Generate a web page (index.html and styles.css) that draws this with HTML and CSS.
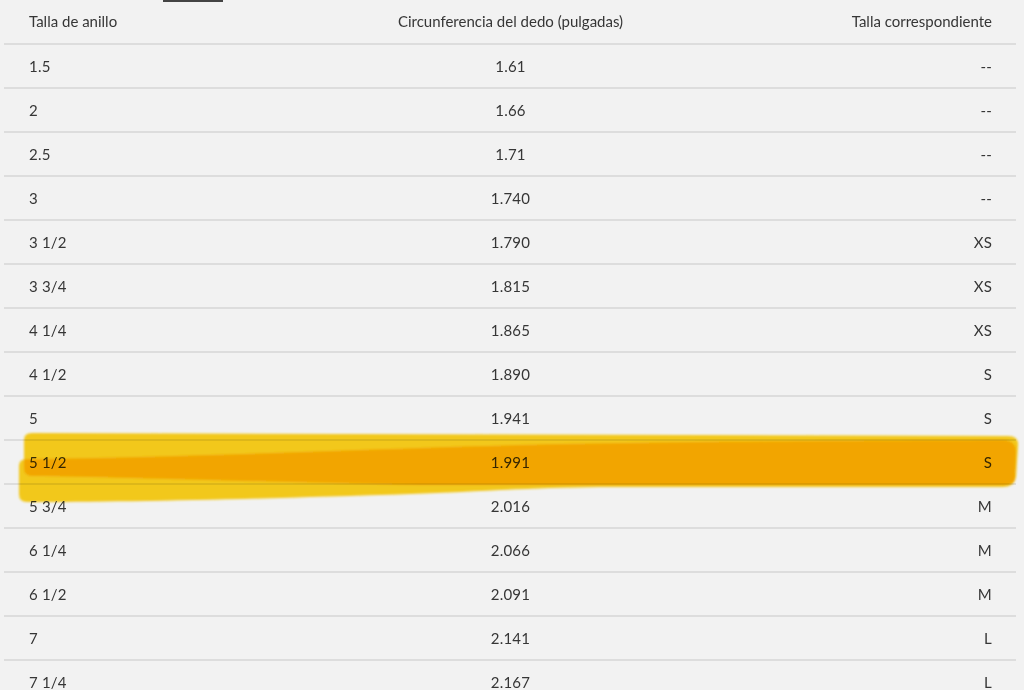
FILE: index.html
```html
<!DOCTYPE html>
<html lang="es">
<head>
<meta charset="utf-8">
<title>Tabla de tallas</title>
<link rel="stylesheet" href="styles.css">
</head>
<body>
<div class="page">
  <div class="tabbar"><span class="tab-underline"></span></div>
  <div class="table">
    <div class="row head"><div class="c1">Talla de anillo</div><div class="c2">Circunferencia del dedo (pulgadas)</div><div class="c3">Talla correspondiente</div></div>
    <div class="row"><div class="c1">1.5</div><div class="c2">1.61</div><div class="c3">--</div></div>
    <div class="row"><div class="c1">2</div><div class="c2">1.66</div><div class="c3">--</div></div>
    <div class="row"><div class="c1">2.5</div><div class="c2">1.71</div><div class="c3">--</div></div>
    <div class="row"><div class="c1">3</div><div class="c2">1.740</div><div class="c3">--</div></div>
    <div class="row"><div class="c1">3 1/2</div><div class="c2">1.790</div><div class="c3">XS</div></div>
    <div class="row"><div class="c1">3 3/4</div><div class="c2">1.815</div><div class="c3">XS</div></div>
    <div class="row"><div class="c1">4 1/4</div><div class="c2">1.865</div><div class="c3">XS</div></div>
    <div class="row"><div class="c1">4 1/2</div><div class="c2">1.890</div><div class="c3">S</div></div>
    <div class="row"><div class="c1">5</div><div class="c2">1.941</div><div class="c3">S</div></div>
    <div class="row"><div class="c1">5 1/2</div><div class="c2">1.991</div><div class="c3">S</div></div>
    <div class="row"><div class="c1">5 3/4</div><div class="c2">2.016</div><div class="c3">M</div></div>
    <div class="row"><div class="c1">6 1/4</div><div class="c2">2.066</div><div class="c3">M</div></div>
    <div class="row"><div class="c1">6 1/2</div><div class="c2">2.091</div><div class="c3">M</div></div>
    <div class="row"><div class="c1">7</div><div class="c2">2.141</div><div class="c3">L</div></div>
    <div class="row"><div class="c1">7 1/4</div><div class="c2">2.167</div><div class="c3">L</div></div>
  </div>
  <svg class="highlight" width="1024" height="690" viewBox="0 0 1024 690" aria-hidden="true">
    <defs>
      <filter id="soft" x="-5%" y="-50%" width="110%" height="200%"><feGaussianBlur stdDeviation="0.9"/></filter>
    </defs>
    <g filter="url(#soft)">
      <path class="stroke" d="M24,440 Q24,433 32,433 L1008,436 Q1019,436 1018,446 L1016,477 Q1015,485 1004,485 L420,485 C260,482 120,477 32,476 Q24,476 24,468 Z"/>
      <path class="stroke" d="M19,466 Q19,459 27,459 C150,458 300,452 420,448 C560,443 720,441 1002,440 Q1016,440 1016,452 L1015,479 Q1014,487 1002,487 L600,487 C520,488 470,492 410,494 C260,499 120,502 27,502 Q19,502 19,494 Z"/>
    </g>
  </svg>
</div>
</body>
</html>
```

FILE: styles.css
```css
html, body {
  margin: 0;
  padding: 0;
  background: #f2f2f2;
}

body {
  font-family: Lato, "Open Sans", "Liberation Sans", sans-serif;
  font-size: 15px;
  color: #363636;
}

.page {
  position: relative;
  width: 1024px;
  height: 690px;
  overflow: hidden;
}

.tabbar {
  height: 2px;
  display: flex;
}

.tab-underline {
  margin-left: 163px;
  width: 60px;
  height: 2px;
  background: #444444;
}

.table {
  margin: 0 8px 0 4px;
}

.row {
  display: grid;
  grid-template-columns: 1fr 1fr 1fr;
  align-items: center;
  height: 42px;
  border-bottom: 2px solid #dddddd;
  padding: 0 24px 0 25px;
  letter-spacing: 0.2px;
}

.row.head {
  box-sizing: border-box;
  height: 43px;
  padding-bottom: 3px;
  letter-spacing: 0;
}

.c1 { text-align: left; }
.c2 { text-align: center; }
.c3 { text-align: right; }

.highlight {
  position: absolute;
  left: 0;
  top: 0;
  pointer-events: none;
  mix-blend-mode: multiply;
}

.stroke {
  fill: #ffd31a;
  mix-blend-mode: multiply;
}
```
